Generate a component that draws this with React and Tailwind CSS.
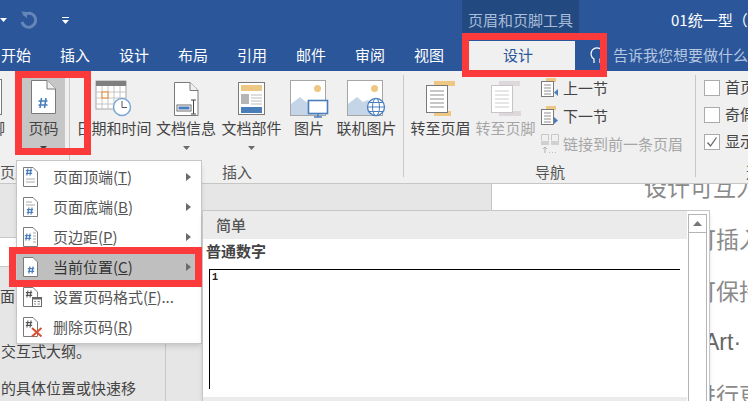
import React from "react";

const FONT = "font-['Noto_Sans_CJK_SC','Liberation_Sans',sans-serif]";

const Hash = ({ x, y, s = 1, color = "#4a7ebb", w = 1.3 }) => (
  <g stroke={color} strokeWidth={w} fill="none">
    <path d={`M${x - 1.5 * s} ${y - 5 * s}L${x - 3 * s} ${y + 5 * s}M${x + 3 * s} ${y - 5 * s}L${x + 1.5 * s} ${y + 5 * s}M${x - 4.5 * s} ${y - 2 * s}H${x + 4.5 * s}M${x - 4.5 * s} ${y + 2 * s}H${x + 4.5 * s}`} />
  </g>
);

const PageIcon = () => (
  <svg width="27" height="36" viewBox="0 0 27 36">
    <path d="M1.5 1.5H17L25.5 10V34.5H1.5Z" fill="#fff" stroke="#7a7a7a" />
    <path d="M17 1.5V10H25.5" fill="#f0f0f0" stroke="#7a7a7a" />
    <Hash x={13} y={24} s={1} w={1.6} />
  </svg>
);

const CalendarIcon = () => (
  <svg width="38" height="37" viewBox="0 0 38 37">
    <rect x="1" y="1" width="30" height="28" fill="#fff" stroke="#a6a6a6" />
    <rect x="1" y="1" width="30" height="5" fill="#7f7f7f" />
    <path d="M7 6V29M13 6V29M19 6V29M25 6V29M1 12H31M1 18H31M1 24H31" stroke="#c4c4c4" />
    <rect x="7" y="12" width="6" height="6" fill="#fff" stroke="#e5862b" />
    <circle cx="27" cy="27" r="8.5" fill="#fff" stroke="#7ba7d6" strokeWidth="1.5" />
    <path d="M27 21V27.5H32" fill="none" stroke="#555" />
  </svg>
);

const DocInfoIcon = () => (
  <svg width="27" height="36" viewBox="0 0 27 36">
    <path d="M1.5 1.5H17L25 9.5V34.5H1.5Z" fill="#fff" stroke="#7a7a7a" />
    <path d="M17 1.5V9.5H25" fill="#f0f0f0" stroke="#7a7a7a" />
    <rect x="4" y="24" width="14" height="6" fill="#fff" stroke="#6d6d6d" />
    <rect x="5.5" y="25.5" width="11" height="3" fill="#4a7ebb" />
    <path d="M18 19H23M18 33H23M20.5 19V33" stroke="#444" fill="none" />
  </svg>
);

const DocPartsIcon = () => (
  <svg width="27" height="33" viewBox="0 0 27 33">
    <rect x="0.5" y="0.5" width="26" height="32" fill="#fff" stroke="#7a7a7a" />
    <rect x="3" y="3" width="21" height="6" fill="#eec883" />
    <rect x="3" y="12" width="8" height="10" fill="#b5b5b5" />
    <path d="M13 13H24M13 16H24M13 19H24M13 22H24" stroke="#bdbdbd" />
    <rect x="3" y="25" width="21" height="6" fill="#4a7ebb" />
  </svg>
);

const PictureIcon = ({ web }) => (
  <svg width="39" height="38" viewBox="0 0 39 38">
    <rect x="0.5" y="0.5" width="35" height="35" fill="#fff" stroke="#a6a6a6" />
    <circle cx="27.5" cy="8.5" r="3.5" fill="#eec883" />
    <path d="M1 35V24L10 17L16 22L21 20L34 35Z" fill="#c5d5e8" />
    {web ? (
      <g fill="#fff" stroke="#4a7ebb">
        <circle cx="29" cy="27" r="8.5" strokeWidth="1.3" />
        <ellipse cx="29" cy="27" rx="3.5" ry="8.5" />
        <path d="M20.5 27H37.5M22 22.5H36M22 31.5H36" />
      </g>
    ) : (
      <g>
        <rect x="18.5" y="20.5" width="19" height="13" fill="#fff" stroke="#4a7ebb" strokeWidth="1.6" />
        <path d="M28 34V37M24 37H32" stroke="#4a7ebb" strokeWidth="1.4" />
      </g>
    )}
  </svg>
);

const HeaderIcon = ({ disabled, footer }) => {
  const band = disabled ? "#dcd8dc" : "#eec883";
  const line = disabled ? "#cfcbcf" : "#8f8f8f";
  const edge = disabled ? "#c8c4c8" : "#7a7a7a";
  return (
    <svg width="30" height="36" viewBox="0 0 30 36">
      <rect x="8" y="0" width="21" height="5" fill={band} />
      <rect x="8" y="30" width={footer ? 22 : 17} height="5" fill={band} />
      <rect x="0.5" y="4.5" width="21" height="27" fill="#fff" stroke={edge} />
      <path d="M4 10H18M4 14H18M4 18H18M4 22H18M4 26H18" stroke={line} />
    </svg>
  );
};

const SectionIcon = ({ down }) => (
  <svg width="18" height="20" viewBox="0 0 18 20">
    <rect x="5" y="0" width="10" height="4" fill="#eec883" />
    <rect x="0.5" y="3.5" width="12" height="15" fill="#fff" stroke="#7a7a7a" />
    <path d="M3 7H10M3 10H10M3 13H10M3 16H10" stroke="#8f8f8f" />
    <path d={down ? "M13 11L17 14.5L13 18Z" : "M17 11L13 14.5L17 18Z"} fill="#4a7ebb" />
  </svg>
);

const LinkIcon = () => (
  <svg width="18" height="20" viewBox="0 0 18 20">
    <path d="M0.5 0.5H7.5V6.5M10.5 6.5V0.5H17.5V6.5M0.5 6.5V0.5M17.5 0.5V6.5" fill="none" stroke="#c8c8c8" />
    <rect x="0" y="7" width="8" height="4" fill="#d0d0d0" />
    <rect x="10" y="7" width="8" height="4" fill="#d0d0d0" />
    <path d="M4 19V13M2 15L4 13L6 15" fill="none" stroke="#b0b0b0" />
    <path d="M8 18.5H17" stroke="#c0c0c0" strokeDasharray="1 2" />
  </svg>
);

const Caret = ({ color = "#6a6a6a" }) => (
  <svg width="7" height="4" viewBox="0 0 7 4"><path d="M0 0H7L3.5 4Z" fill={color} /></svg>
);

const RibbonBtn = ({ w, icon, label, caret, disabled }) => (
  <div className={`flex flex-col items-center shrink-0 pt-[8px] ${w}`}>
    <div className="h-[39px] flex items-center justify-center">{icon}</div>
    <div className={`-mt-[1px] text-[15px] leading-[22px] whitespace-nowrap ${disabled ? "text-[#a6a6a6]" : "text-[#444]"}`}>{label}</div>
    {caret && <div className="mt-[7px] flex"><Caret /></div>}
  </div>
);

const Group = ({ w, label, children, last }) => (
  <div className={`relative shrink-0 flex flex-col ${w}`}>
    <div className="flex h-[82px]">{children}</div>
    <div className="h-[30px] pt-[8px] text-center text-[15px] leading-[22px] text-[#555] whitespace-nowrap">{label}</div>
    {!last && <div className="absolute right-0 top-[4px] bottom-[6px] w-px bg-[#c8c8c8]" />}
  </div>
);

const SmallRow = ({ icon, label, disabled }) => (
  <div className="h-[28px] flex items-center gap-[4px]">
    <div className="w-[18px] flex">{icon}</div>
    <span className={`text-[15px] whitespace-nowrap ${disabled ? "text-[#a6a6a6]" : "text-[#444]"}`}>{label}</span>
  </div>
);

const CheckRow = ({ label, checked }) => (
  <div className="h-[27px] flex items-center gap-[5px]">
    <div className="w-[16px] h-[16px] bg-white border border-[#ababab] flex items-center justify-center shrink-0">
      {checked && (
        <svg width="12" height="12" viewBox="0 0 12 12"><path d="M1.5 6.5L4.5 10L10.5 1.5" fill="none" stroke="#666" strokeWidth="1.3" /></svg>
      )}
    </div>
    <span className="text-[15px] text-[#444] whitespace-nowrap">{label}</span>
  </div>
);

const MenuIcon = ({ kind }) => (
  <svg width="20" height="20" viewBox="0 0 20 20">
    <path d="M0.5 0.5H10L14.5 5V19.5H0.5Z" fill="#fff" stroke="#7a7a7a" />
    {kind === "top" && (
      <g>
        <Hash x={6} y={5} s={0.7} w={1.2} />
        <path d="M3 12H12M3 15H12" stroke="#aaa" />
      </g>
    )}
    {kind === "bottom" && (
      <g>
        <path d="M3 5H9M3 8H12" stroke="#aaa" />
        <Hash x={7} y={14} s={0.7} w={1.2} />
      </g>
    )}
    {kind === "margin" && (
      <g>
        <Hash x={5} y={10} s={0.7} w={1.2} />
        <path d="M10 6H13M10 9H13M10 12H13M10 15H13" stroke="#aaa" />
      </g>
    )}
    {kind === "current" && <Hash x={8} y={13} s={0.7} w={1.3} />}
    {kind === "format" && (
      <g>
        <Hash x={6} y={7} s={0.7} color="#555" w={1.1} />
        <rect x="9.5" y="10.5" width="9" height="9" fill="#fff" stroke="#666" />
        <rect x="9.5" y="10.5" width="9" height="2" fill="#666" />
        <path d="M11 14.5H13M14.5 14.5H17M11 17H13M14.5 17H17" stroke="#888" />
      </g>
    )}
    {kind === "delete" && (
      <g>
        <Hash x={6} y={7} s={0.7} color="#555" w={1.1} />
        <path d="M9 11L18.5 19.5M18.5 11L9 19.5" stroke="#d9502e" strokeWidth="2" />
      </g>
    )}
  </svg>
);

const menuItems = [
  { kind: "top", text: "页面顶端", key: "T", arrow: true },
  { kind: "bottom", text: "页面底端", key: "B", arrow: true },
  { kind: "margin", text: "页边距", key: "P", arrow: true },
  { kind: "current", text: "当前位置", key: "C", arrow: true, active: true },
  { kind: "format", text: "设置页码格式", key: "F", tail: "..." },
  { kind: "delete", text: "删除页码", key: "R" },
];

const tabs = ["开始", "插入", "设计", "布局", "引用", "邮件", "审阅", "视图"];

export default function App() {
  return (
    <div className={`relative w-[748px] h-[401px] overflow-hidden flex flex-col bg-[#e6e6e6] ${FONT}`}>
      {/* title bar */}
      <div className="h-[40px] shrink-0 bg-[#2b579a] flex relative">
        <div className="w-[462px] flex items-center">
          <svg width="7" height="4" viewBox="0 0 7 4"><path d="M0 0H7L3.5 4Z" fill="#fff" /></svg>
          <svg className="ml-[11px]" width="20" height="20" viewBox="0 0 20 20">
            <path d="M5.5 5.5A7 7 0 1 1 4 12" fill="none" stroke="#6686b8" strokeWidth="3" />
            <path d="M3 1.5L9 2V8.5Z" fill="#6686b8" />
          </svg>
          <div className="ml-[24px] flex flex-col items-center gap-[2px]">
            <div className="w-[7px] h-px bg-white" />
            <Caret color="#fff" />
          </div>
        </div>
        <div className="w-[117px] bg-[#234a80] text-center text-[15px] leading-[40px] text-[#a9bcd9] whitespace-nowrap">页眉和页脚工具</div>
        <div className="ml-[92px] text-[15px] leading-[40px] text-white whitespace-nowrap">01统一型（</div>
      </div>

      {/* tabs */}
      <div className="h-[31px] shrink-0 bg-[#2b579a] flex items-end text-[15px] text-white whitespace-nowrap">
        <div className="flex gap-[29px] pl-[1px] h-full items-center">
          {tabs.map((t, i) => (
            <span key={i}>{t}</span>
          ))}
        </div>
        <div className="ml-[25px] w-[110px] h-[30px] pr-[8px] bg-[#f0f0f0] text-[#2b579a] text-center leading-[28px]">设计</div>
        <div className="ml-[11px] h-full flex items-center gap-[5px] text-[#b5c6e0]">
          <svg width="22" height="20" viewBox="0 0 22 20"><path d="M8 17V13A6 6 0 1 1 14 13V17" fill="none" stroke="#fff" strokeWidth="1.2" /></svg>
          <span>告诉我您想要做什么</span>
        </div>
      </div>

      {/* ribbon */}
      <div className="h-[113px] shrink-0 bg-[#f0f0f0] border-b border-[#c6c6c6] flex overflow-hidden">
        <Group w="w-[70px]" label={<span className="block text-left">页眉</span>}>
          <div className="w-[22px] relative overflow-hidden">
            <div className="absolute left-[-25px] top-[46px] text-[15px] leading-[22px] text-[#444] whitespace-nowrap">页脚</div>
            <div className="absolute left-[-10px] top-[8px] w-[12px] h-[36px] bg-white border border-[#7a7a7a]" />
          </div>
          <div className="w-[43px] h-[84px] bg-[#c6c6c6] flex flex-col items-center pt-[8px]">
            <div className="h-[35px] flex items-center"><PageIcon /></div>
            <div className="mt-[3px] text-[15px] leading-[22px] text-[#444]">页码</div>
            <div className="mt-[7px] flex"><Caret color="#444" /></div>
          </div>
        </Group>
        <Group w="w-[334px]" label="插入">
          <div className="w-[5px]" />
          <RibbonBtn w="w-[78px]" icon={<CalendarIcon />} label="日期和时间" />
          <RibbonBtn w="w-[66px]" icon={<DocInfoIcon />} label="文档信息" caret />
          <RibbonBtn w="w-[65px]" icon={<DocPartsIcon />} label="文档部件" caret />
          <RibbonBtn w="w-[50px]" icon={<PictureIcon />} label="图片" />
          <RibbonBtn w="w-[65px]" icon={<PictureIcon web />} label="联机图片" />
        </Group>
        <Group w="w-[292px]" label="导航">
          <div className="w-[4px]" />
          <RibbonBtn w="w-[65px]" icon={<HeaderIcon />} label="转至页眉" />
          <RibbonBtn w="w-[65px]" icon={<HeaderIcon disabled footer />} label="转至页脚" disabled />
          <div className="ml-[3px] pt-[3px]">
            <SmallRow icon={<SectionIcon />} label="上一节" />
            <SmallRow icon={<SectionIcon down />} label="下一节" />
            <SmallRow icon={<LinkIcon />} label="链接到前一条页眉" disabled />
          </div>
        </Group>
        <Group w="w-[60px]" label={<span className="relative left-[35px]">选项</span>} last>
          <div className="pl-[8px] pt-[3px]">
            <CheckRow label="首页不同" />
            <CheckRow label="奇偶页不同" />
            <CheckRow label="显示文档文字" checked />
          </div>
        </Group>
      </div>

      {/* body */}
      <div className="flex-1 flex min-h-0">
        <div className="w-[166px] shrink-0 border-r border-[#c8c8c8] text-[15px] leading-[24px] text-[#444] whitespace-nowrap overflow-hidden">
          <div className="h-[53px]" />
          <div className="h-[30px] bg-white border-y border-[#c8c8c8]" />
          <div className="mt-[17px]">面</div>
          <div className="mt-[31px] pl-px">交互式大纲。</div>
          <div className="mt-[13px] pl-px">的具体位置或快速移</div>
        </div>
        <div className="w-[326px] shrink-0 border-r border-[#c6c6c6]" />
        <div className="flex-1 bg-white overflow-hidden whitespace-nowrap text-[23px] leading-[52px] text-[#8a8a8a]">
          <div className="-mt-[24px] pl-[152px]">设计可互为</div>
          <div className="pl-[201px]">可插入</div>
          <div className="pl-[201px]">可保持</div>
          <div className="pl-[212px] font-medium text-[#666] font-['Liberation_Sans',sans-serif]">Art· 图</div>
          <div className="pl-[201px]">进行更</div>
        </div>
      </div>

      {/* menu */}
      <div className="absolute left-[16px] top-[160px] w-[186px] h-[184px] py-[1px] bg-white border border-[#c6c6c6] shadow-md text-[15px] text-[#555] whitespace-nowrap">
        {menuItems.map((m) => (
          <div key={m.kind} className={`h-[30px] flex items-center pl-[6px] pr-[10px] ${m.active ? "bg-[#bfbfbf] text-[#333]" : ""}`}>
            <div className="w-[20px] flex"><MenuIcon kind={m.kind} /></div>
            <span className="ml-[10px] flex-1">
              {m.text}(<u>{m.key}</u>){m.tail}
            </span>
            {m.arrow && (
              <svg width="5" height="8" viewBox="0 0 5 8"><path d="M0 0L5 4L0 8Z" fill="#6a6a6a" /></svg>
            )}
          </div>
        ))}
      </div>

      {/* gallery */}
      <div className="absolute left-[202px] top-[210px] w-[508px] h-[200px] bg-white border border-[#c6c6c6] shadow-md flex">
        <div className="w-[484px] shrink-0 flex flex-col">
          <div className="h-[28px] bg-[#ebebeb] pl-[13px] text-[15px] font-medium leading-[28px] text-[#555]">简单</div>
          <div className="pl-[3px] mt-[1px] text-[15px] font-bold leading-[22px] text-[#444]">普通数字</div>
          <div className="ml-[6px] mt-[7px] w-[471px] h-[120px] border-t border-l border-black pl-[2px] text-[10px] leading-[15px] font-['Liberation_Mono',monospace] font-bold text-[#222]">1</div>
          <div className="mt-[8px] h-[10px] bg-[#ebebeb]" />
        </div>
        <div className="ml-[1px] mt-[3px] w-[19px] flex flex-col border border-[#b5b5b5]">
          <div className="h-[18px] border-b border-[#b5b5b5] flex items-center justify-center">
            <svg width="9" height="5" viewBox="0 0 9 5"><path d="M0 5L4.5 0L9 5Z" fill="#777" /></svg>
          </div>
        </div>
      </div>

      {/* red annotation boxes */}
      <div className="absolute left-[15px] top-[71px] w-[76px] h-[84px] border-[7px] border-[#fb3a3c]" />
      <div className="absolute left-[462px] top-[33px] w-[145px] h-[44px] border-[7px] border-[#fb3a3c]" />
      <div className="absolute left-[9px] top-[247px] w-[193px] h-[40px] border-[7px] border-[#fb3a3c]" />
    </div>
  );
}
